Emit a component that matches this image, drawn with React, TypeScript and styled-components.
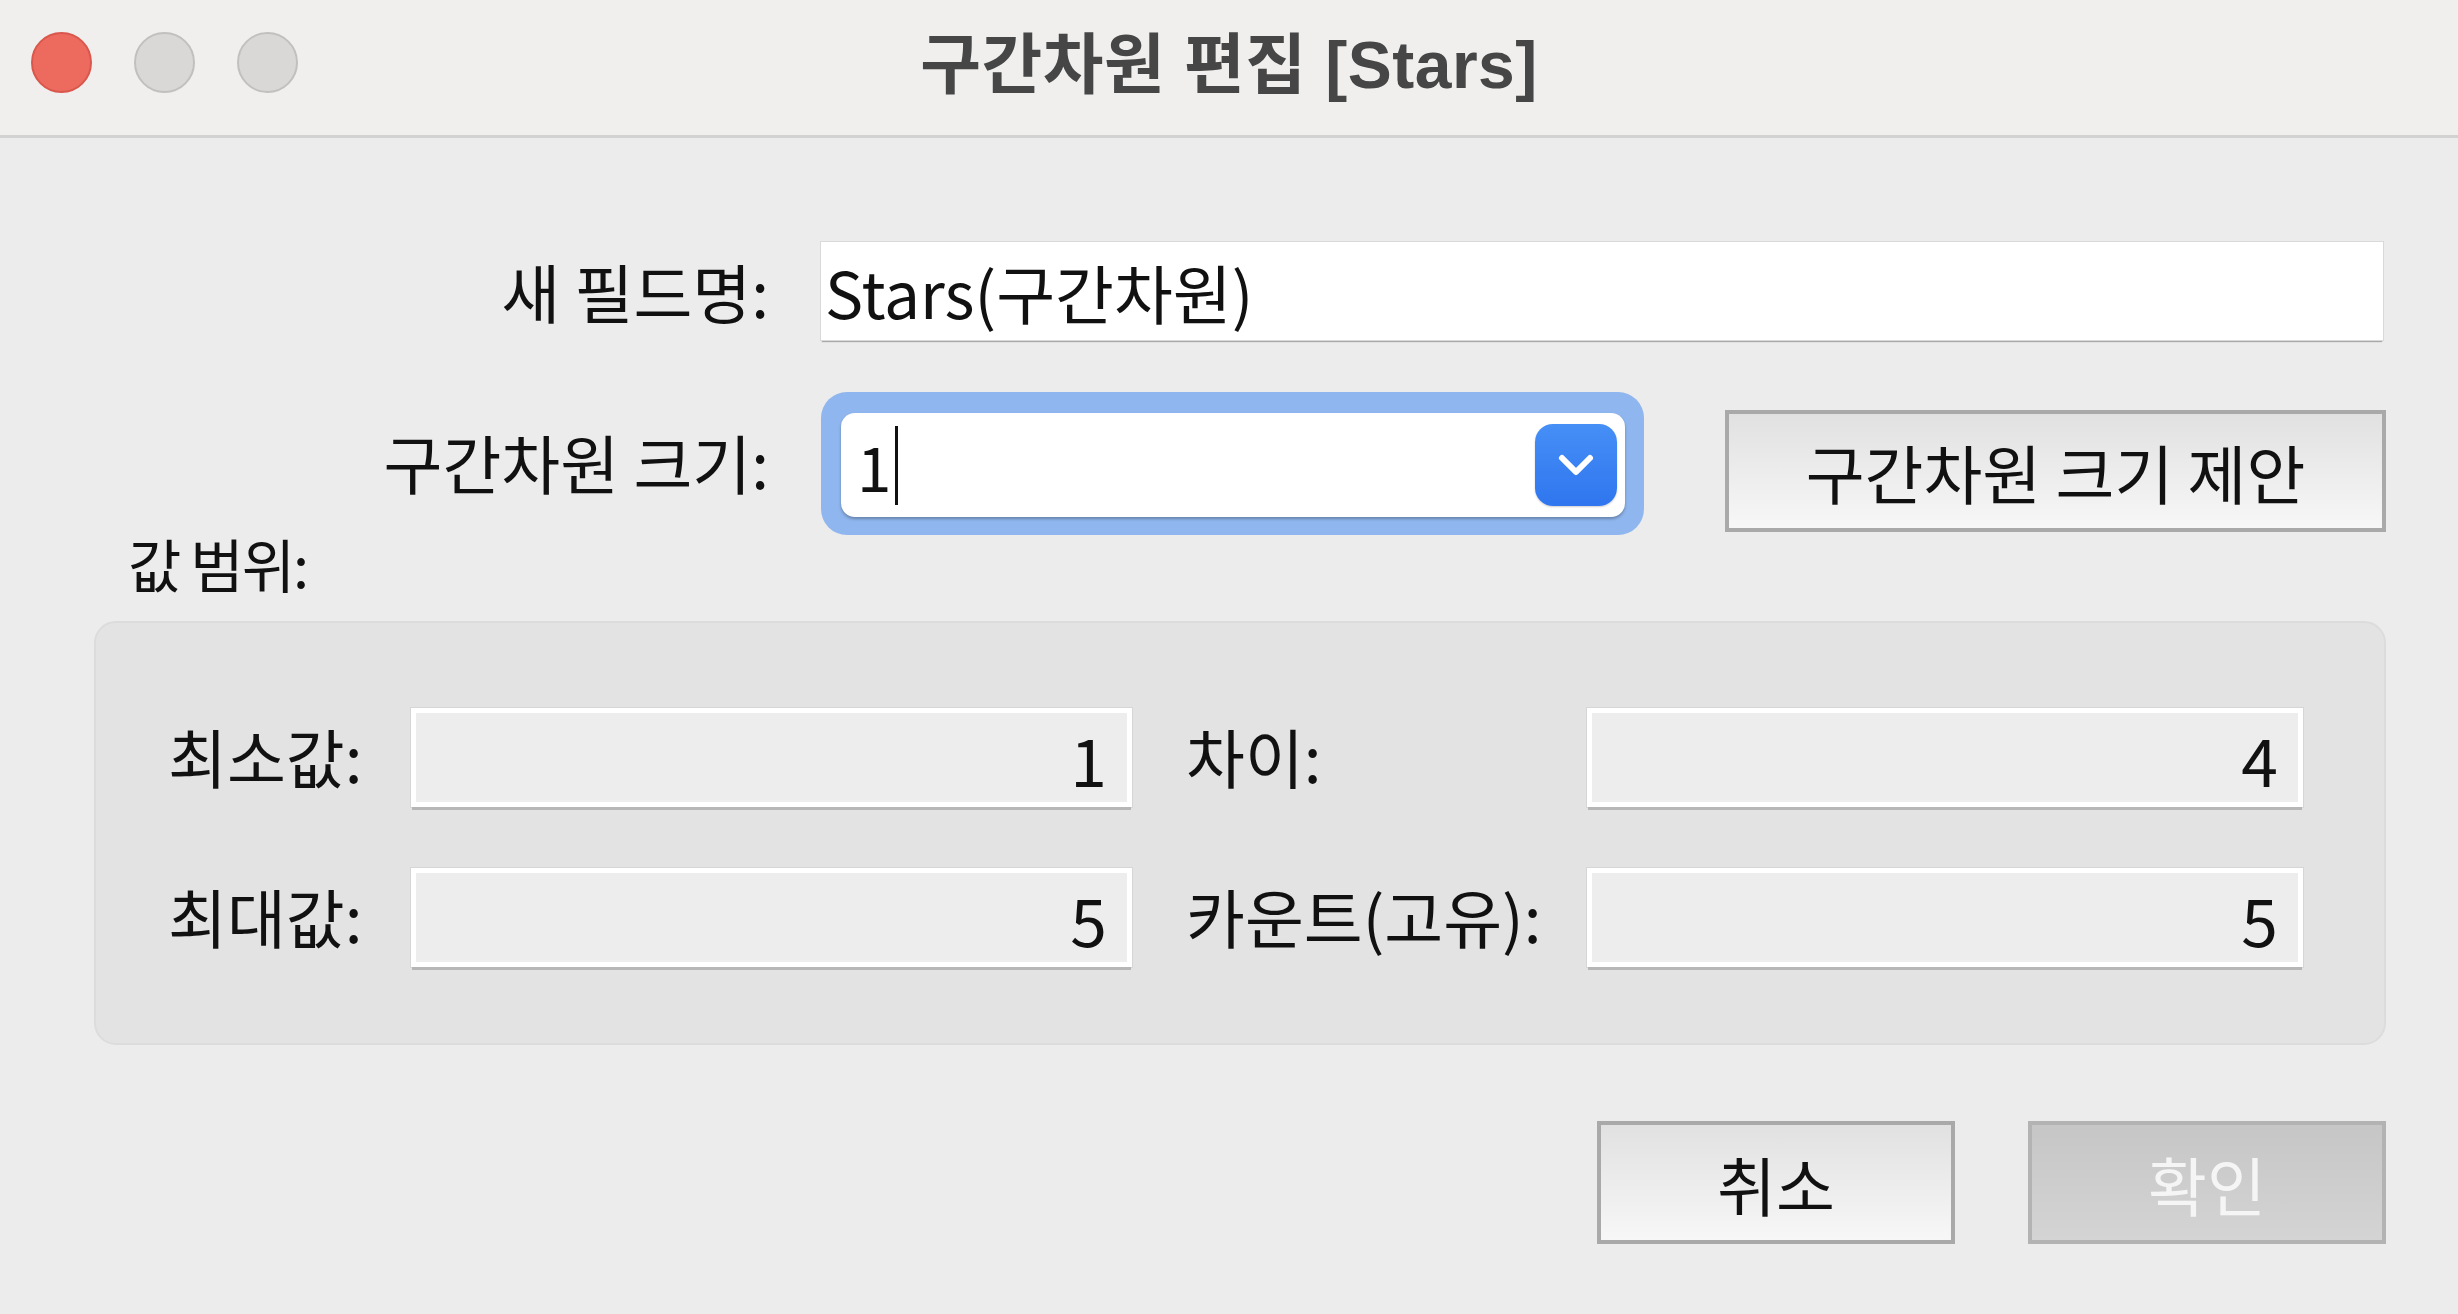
import React from 'react';
import styled, { createGlobalStyle } from 'styled-components';

const GlobalStyle = createGlobalStyle`
  html, body {
    margin: 0;
    padding: 0;
    background: #ececec;
  }
  * {
    box-sizing: border-box;
  }
`;

const Window = styled.div`
  width: 2458px;
  height: 1314px;
  display: flex;
  flex-direction: column;
  background: #ececec;
  font-family: "Noto Sans CJK KR", "Noto Sans", sans-serif;
  color: #111;
  overflow: hidden;
`;

const TitleBar = styled.div`
  height: 138px;
  flex-shrink: 0;
  display: grid;
  grid-template-columns: 1fr auto 1fr;
  align-items: center;
  background: #f0efee;
  border-bottom: 3px solid #d2d2d2;
`;

const Lights = styled.div`
  display: flex;
  align-items: center;
  gap: 42px;
  padding-left: 31px;
  margin-top: -10px;
`;

const Light = styled.span<{ red?: boolean }>`
  width: 61px;
  height: 61px;
  border-radius: 50%;
  background: ${p => (p.red ? '#ed6a5e' : '#d9d8d7')};
  border: 2px solid ${p => (p.red ? '#d9574c' : '#c1c0bf')};
`;

const Title = styled.div`
  font-family: "Liberation Sans", "Noto Sans CJK KR", sans-serif;
  font-weight: 700;
  font-size: 66px;
  color: #464646;
  margin-top: -18px;
  letter-spacing: 0.5px;
`;

const Body = styled.div`
  flex: 1;
  display: flex;
  flex-direction: column;
  padding: 104px 72px 0 94px;
`;

const FormRow = styled.div<{ h: number; gapTop?: number }>`
  display: flex;
  align-items: center;
  height: ${p => p.h}px;
  margin-top: ${p => p.gapTop || 0}px;
`;

const RowLabel = styled.div`
  width: 727px;
  flex-shrink: 0;
  padding-right: 52px;
  margin-top: -6px;
  text-align: right;
  font-size: 64px;
  white-space: nowrap;
`;

const NameInput = styled.div`
  flex: 1;
  height: 98px;
  margin-right: 3px;
  margin-top: -3px;
  display: flex;
  align-items: center;
  padding-left: 4px;
  background: #fff;
  box-shadow: 0 0 0 1px #d9d9d9, 0 3px 1px -1px #a9a9a9;
  font-size: 64px;
  white-space: nowrap;
`;

const FocusRing = styled.div`
  width: 823px;
  height: 143px;
  flex-shrink: 0;
  padding: 21px 19px 18px 20px;
  border-radius: 26px;
  background: #8fb6ee;
`;

const ComboField = styled.div`
  height: 100%;
  display: flex;
  align-items: center;
  padding: 0 8px 0 16px;
  background: #fff;
  border-radius: 14px;
  box-shadow: 0 2px 3px rgba(0, 0, 0, 0.28);
  font-size: 62px;
`;

const Caret = styled.span`
  display: inline-block;
  width: 3px;
  height: 79px;
  margin-left: 4px;
  background: #111;
`;

const ComboText = styled.div`
  flex: 1;
  display: flex;
  align-items: center;
`;

const DropButton = styled.div`
  width: 82px;
  height: 82px;
  border-radius: 18px;
  display: flex;
  align-items: center;
  justify-content: center;
  background: linear-gradient(#468ff6, #2f76ef);
  box-shadow: 0 1px 2px rgba(0, 0, 0, 0.2);
`;

const PushButton = styled.div<{ disabled?: boolean }>`
  display: flex;
  align-items: center;
  justify-content: center;
  height: 123px;
  border: 4px solid ${p => (p.disabled ? '#b3b3b3' : '#a9a9a9')};
  background: ${p =>
    p.disabled
      ? 'linear-gradient(#c6c6c6, #d4d4d4)'
      : 'linear-gradient(#e1e1e1, #f7f7f7)'};
  color: ${p => (p.disabled ? '#f5f5f5' : '#111')};
  font-size: 64px;
  white-space: nowrap;
`;

const SuggestButton = styled(PushButton)`
  flex: 1;
  height: 122px;
  margin-left: 81px;
  margin-top: 15px;
`;

const SectionLabel = styled.div`
  height: 88px;
  line-height: 60px;
  padding-left: 34px;
  font-size: 58px;
  letter-spacing: -2px;
  margin-top: -2px;
`;

const Group = styled.div`
  height: 424px;
  padding: 85px 81px 0 76px;
  background: #e3e3e3;
  border: 2px solid #dcdcdc;
  border-radius: 22px;
  display: grid;
  grid-template-columns: 239px 721px 455px 1fr;
  grid-auto-rows: 103px;
  row-gap: 57px;
  align-items: center;
`;

const StatLabel = styled.div<{ second?: boolean }>`
  padding-left: ${p => (p.second ? 58 : 0)}px;
  margin-left: -4px;
  font-size: 64px;
  white-space: nowrap;
  margin-top: -10px;
`;

const StatValue = styled.div`
  height: 99px;
  align-self: start;
  display: flex;
  align-items: center;
  justify-content: flex-end;
  padding-right: 20px;
  background: #ededed;
  border: 5px solid #fff;
  box-shadow: 0 4px 0 -1px #b6b6b6, 0 0 0 1px #d6d6d6;
  font-size: 66px;
`;

const Footer = styled.div`
  display: flex;
  justify-content: flex-end;
  gap: 73px;
  margin-top: 76px;
`;

const FooterButton = styled(PushButton)`
  width: 358px;
`;

const Chevron = () => (
  <svg width="38" height="24" viewBox="0 0 38 24">
    <polyline
      points="5,5 19,19 33,5"
      fill="none"
      stroke="#fff"
      strokeWidth="6"
      strokeLinecap="round"
      strokeLinejoin="round"
    />
  </svg>
);

const stats = [
  { label: '최소값:', value: '1', label2: '차이:', value2: '4' },
  { label: '최대값:', value: '5', label2: '카운트(고유):', value2: '5' },
];

const App: React.FC = () => {
  return (
    <Window>
      <GlobalStyle />
      <TitleBar>
        <Lights>
          <Light red />
          <Light />
          <Light />
        </Lights>
        <Title>구간차원 편집 [Stars]</Title>
        <div />
      </TitleBar>

      <Body>
        <FormRow h={101}>
          <RowLabel>새 필드명:</RowLabel>
          <NameInput>Stars(구간차원)</NameInput>
        </FormRow>

        <FormRow h={143} gapTop={49}>
          <RowLabel>구간차원 크기:</RowLabel>
          <FocusRing>
            <ComboField>
              <ComboText>
                1<Caret />
              </ComboText>
              <DropButton>
                <Chevron />
              </DropButton>
            </ComboField>
          </FocusRing>
          <SuggestButton>구간차원 크기 제안</SuggestButton>
        </FormRow>

        <SectionLabel>값 범위:</SectionLabel>

        <Group>
          {stats.map(s => (
            <React.Fragment key={s.label}>
              <StatLabel>{s.label}</StatLabel>
              <StatValue>{s.value}</StatValue>
              <StatLabel second>{s.label2}</StatLabel>
              <StatValue>{s.value2}</StatValue>
            </React.Fragment>
          ))}
        </Group>

        <Footer>
          <FooterButton>취소</FooterButton>
          <FooterButton disabled>확인</FooterButton>
        </Footer>
      </Body>
    </Window>
  );
};

export default App;
